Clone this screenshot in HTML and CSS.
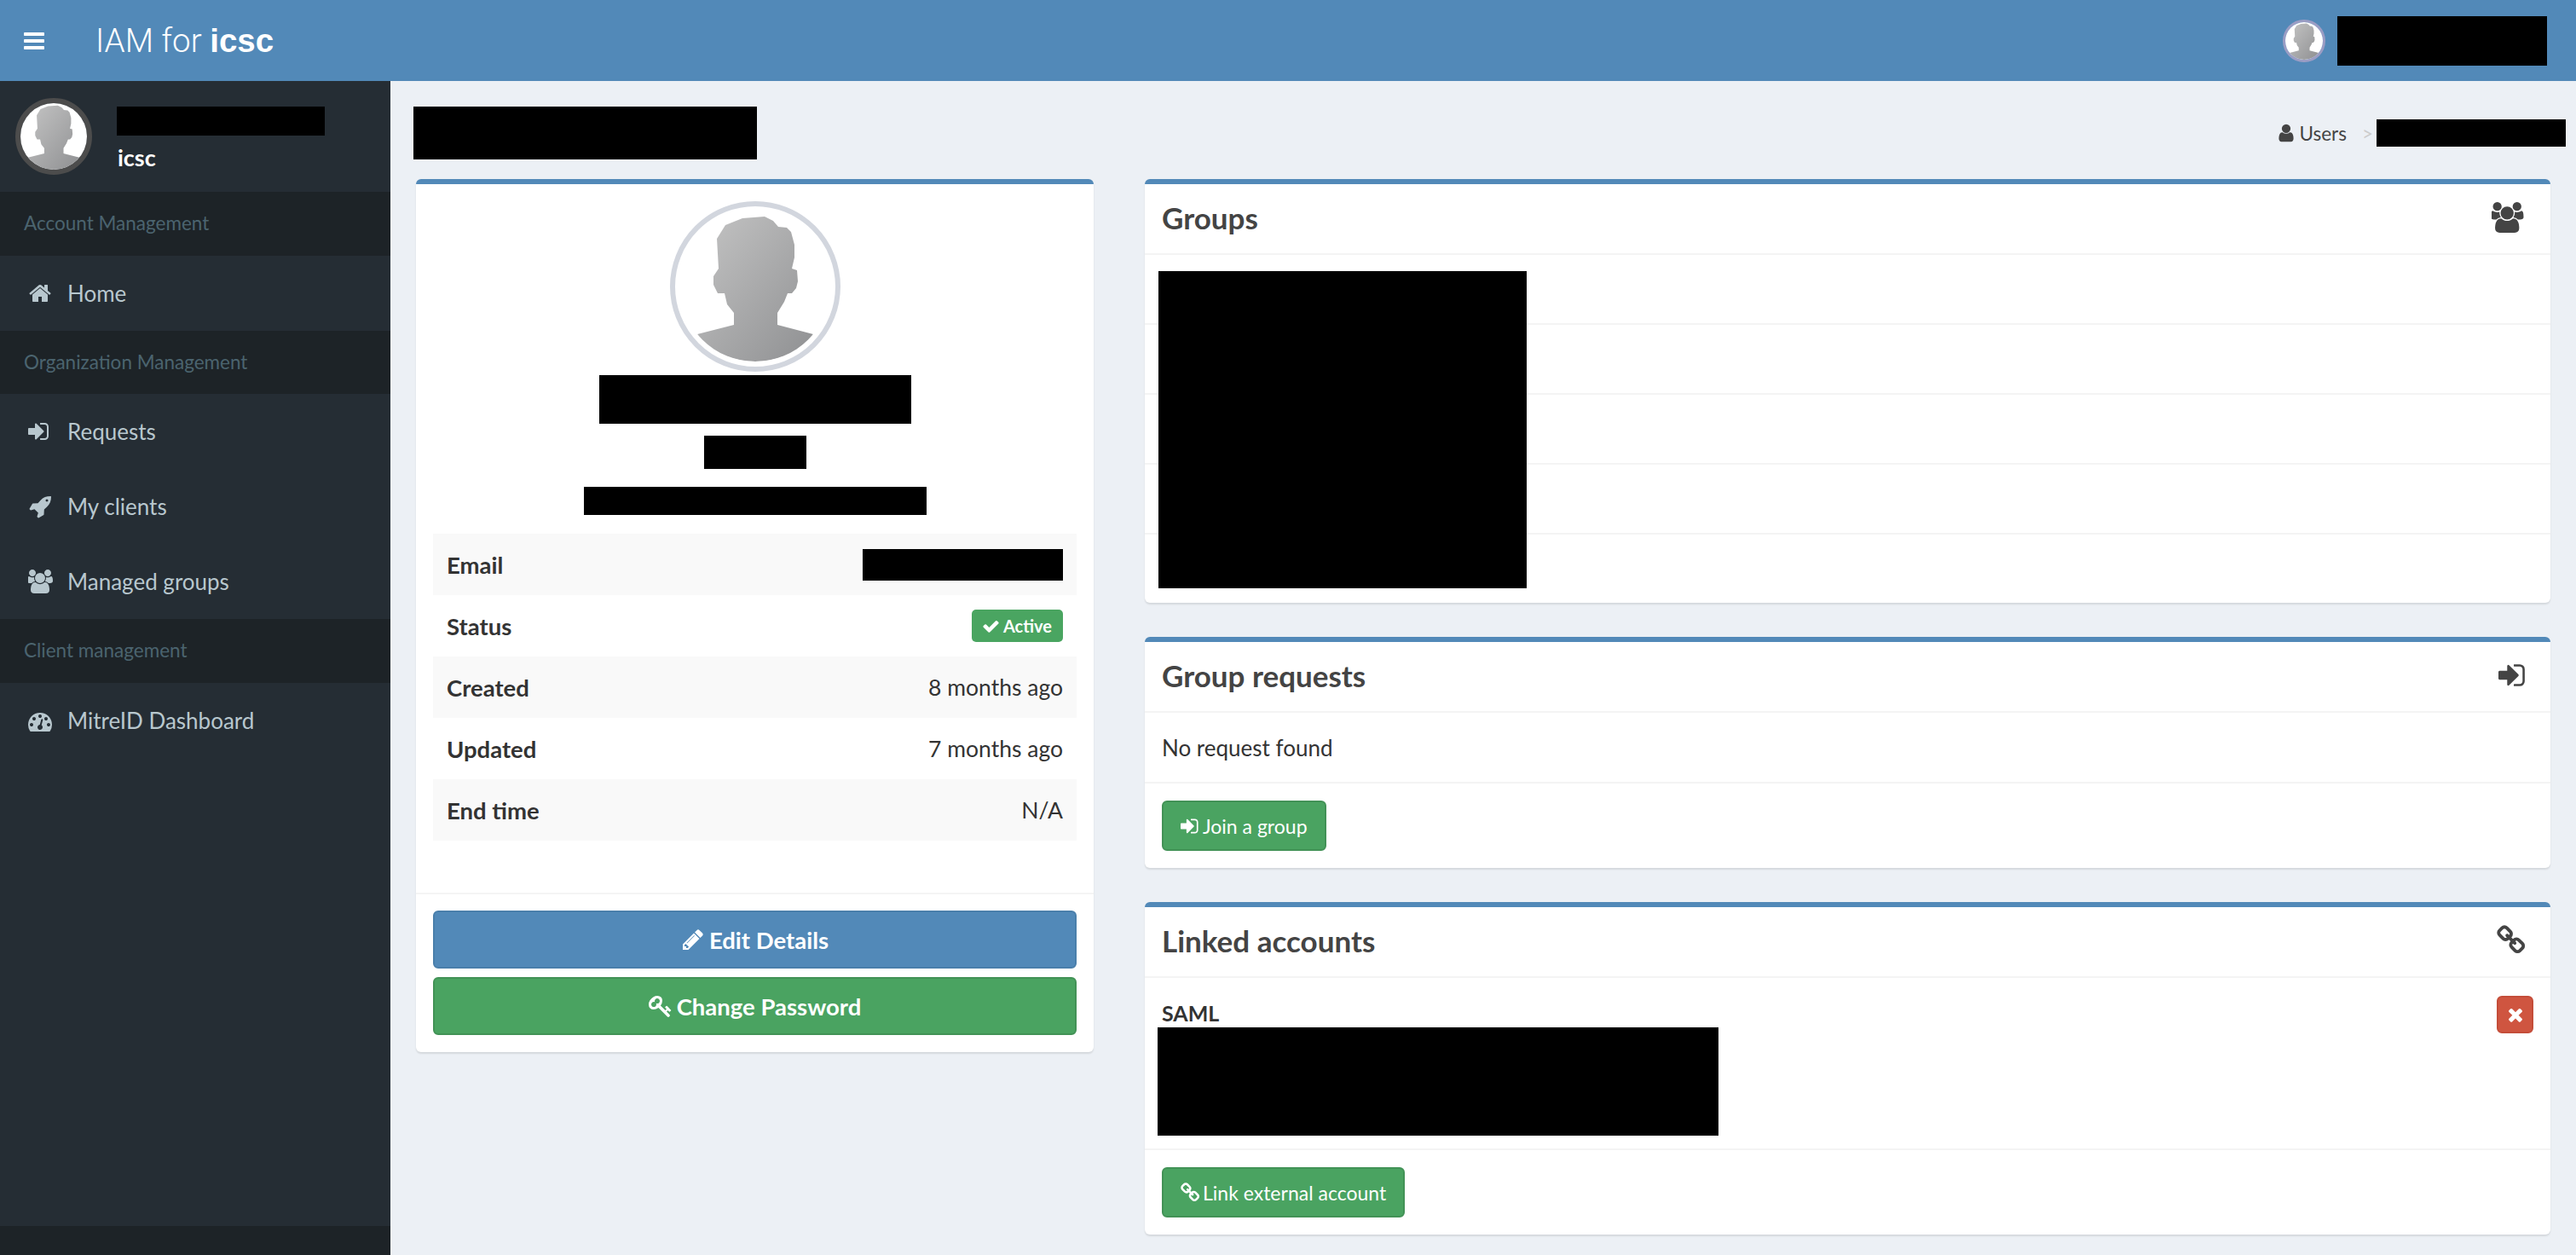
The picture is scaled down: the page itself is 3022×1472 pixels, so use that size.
FILE: index.html
```html
<!DOCTYPE html>
<html lang="en">
<head>
<meta charset="utf-8">
<title>IAM for icsc</title>
<link rel="stylesheet" href="styles.css">
</head>
<body>
<svg class="sprite" xmlns="http://www.w3.org/2000/svg">
  <defs>
    <linearGradient id="sil" x1="0" y1="0" x2="1" y2="1">
      <stop offset="0" stop-color="#c4c4c4"/>
      <stop offset="1" stop-color="#8f9092"/>
    </linearGradient>
  </defs>
  <symbol id="avatar" viewBox="12 12 176 176">
    <circle cx="100" cy="100" r="100" fill="#fff"/>
    <path fill="url(#sil)" d="M111 18 L121 23 L127 30 L137 31 L142 36 L146 51 L146 66 L143 79 L149 81 L150 94 L148 102 L143 108 L138 108 L134 118 L126 131 L126 145 L168 156 C155 176 128 188 100 188 C72 188 45 176 32 156 L75 145 L75 131 L67 121 L64 108 L56 108 L51 98 L51 88 L57 79 L55 44 L65 28 L85 20 Z"/>
  </symbol>
  <symbol id="i-bars" viewBox="0 0 1792 1792"><path d="M1664 1344v128q0 26-19 45t-45 19h-1408q-26 0-45-19t-19-45v-128q0-26 19-45t45-19h1408q26 0 45 19t19 45zm0-512v128q0 26-19 45t-45 19h-1408q-26 0-45-19t-19-45v-128q0-26 19-45t45-19h1408q26 0 45 19t19 45zm0-512v128q0 26-19 45t-45 19h-1408q-26 0-45-19t-19-45v-128q0-26 19-45t45-19h1408q26 0 45 19t19 45z"/></symbol>
  <symbol id="i-home" viewBox="0 0 1792 1792"><path d="M1472 992v480q0 26-19 45t-45 19h-384v-384h-256v384h-384q-26 0-45-19t-19-45v-480q0-1 .5-3t.5-3l575-474 575 474q1 2 1 6zm223-69l-62 74q-8 9-21 11h-3q-13 0-21-7l-692-577-692 577q-12 8-24 7-13-2-21-11l-62-74q-8-10-7-23.5t11-21.5l719-599q32-26 76-26t76 26l244 204v-195q0-14 9-23t23-9h192q14 0 23 9t9 23v408l219 182q10 8 11 21.5t-7 23.5z"/></symbol>
  <symbol id="i-signin" viewBox="0 0 1792 1792"><path d="M1184 896q0 26-19 45l-544 544q-19 19-45 19t-45-19-19-45v-288h-448q-26 0-45-19t-19-45v-384q0-26 19-45t45-19h448v-288q0-26 19-45t45-19 45 19l544 544q19 19 19 45zm352-352v704q0 119-84.5 203.5t-203.5 84.5h-320q-13 0-22.5-9.5t-9.5-22.5q0-4-1-20t-.5-26.5 3-23.5 10-19.5 20.5-6.5h320q66 0 113-47t47-113v-704q0-66-47-113t-113-47h-288-11-13t-11.5-1-11.5-3-8-5.5-7-9-2-13.5q0-4-1-20t-.5-26.5 3-23.5 10-19.5 20.5-6.5h320q119 0 203.5 84.5t84.5 203.5z"/></symbol>
  <symbol id="i-rocket" viewBox="0 0 1792 1792"><path d="M1504 448q0-40-28-68t-68-28-68 28-28 68 28 68 68 28 68-28 28-68zm224-288q0 249-75.5 430.5t-253.5 360.5q-81 80-195 176l-20 379q-2 16-16 26l-384 224q-7 4-16 4-12 0-23-9l-64-64q-13-14-8-32l85-276-281-281-276 85q-3 1-9 1-14 0-23-9l-64-64q-17-19-5-39l224-384q10-14 26-16l379-20q96-114 176-195 188-187 358-258t431-71q14 0 24 9.5t10 22.5z"/></symbol>
  <symbol id="i-users" viewBox="0 0 1920 1792"><path d="M529 896q-162 5-265 128h-134q-82 0-138-40.5t-56-118.5q0-353 124-353 6 0 43.5 21t97.5 42.5 119 21.5q67 0 133-23-5 37-5 66 0 139 81 256zm1071 637q0 120-73 189.5t-194 69.5h-874q-121 0-194-69.5t-73-189.5q0-53 3.5-103.5t14-109 26.5-108.5 43-97.5 62-81 85.5-53.5 111.5-20q10 0 43 21.5t73 48 107 48 135 21.5 135-21.5 107-48 73-48 43-21.5q61 0 111.5 20t85.5 53.5 62 81 43 97.5 26.5 108.5 14 109 3.5 103.5zm-1024-1277q0 106-75 181t-181 75-181-75-75-181 75-181 181-75 181 75 75 181zm704 384q0 159-112.5 271.5t-271.5 112.5-271.5-112.5-112.5-271.5 112.5-271.5 271.5-112.5 271.5 112.5 112.5 271.5zm576 225q0 78-56 118.5t-138 40.5h-134q-103-123-265-128 81-117 81-256 0-29-5-66 66 23 133 23 59 0 119-21.5t97.5-42.5 43.5-21q124 0 124 353zm-128-609q0 106-75 181t-181 75-181-75-75-181 75-181 181-75 181 75 75 181z"/></symbol>
  <symbol id="i-dash" viewBox="0 0 1792 1792"><path d="M384 1216q0-53-37.5-90.5t-90.5-37.5-90.5 37.5-37.5 90.5 37.5 90.5 90.5 37.5 90.5-37.5 37.5-90.5zm192-448q0-53-37.5-90.5t-90.5-37.5-90.5 37.5-37.5 90.5 37.5 90.5 90.5 37.5 90.5-37.5 37.5-90.5zm428 481l101-382q6-26-7.5-48.5t-38.5-29.5-48 6.5-30 39.5l-101 382q-60 5-107 43.5t-63 98.5q-20 77 20 146t117 89 146-20 89-117q16-60-6-117t-72-91zm660-33q0-53-37.5-90.5t-90.5-37.5-90.5 37.5-37.5 90.5 37.5 90.5 90.5 37.5 90.5-37.5 37.5-90.5zm-640-640q0-53-37.5-90.5t-90.5-37.5-90.5 37.5-37.5 90.5 37.5 90.5 90.5 37.5 90.5-37.5 37.5-90.5zm448 192q0-53-37.5-90.5t-90.5-37.5-90.5 37.5-37.5 90.5 37.5 90.5 90.5 37.5 90.5-37.5 37.5-90.5zm320 448q0 261-141 483-19 29-54 29h-1402q-35 0-54-29-141-221-141-483 0-182 71-348t191-286 286-191 348-71 348 71 286 191 191 286 71 348z"/></symbol>
  <symbol id="i-user" viewBox="0 0 1792 1792"><path d="M1536 1399q0 109-62.5 187t-150.5 78h-854q-88 0-150.5-78t-62.5-187q0-85 8.5-160.5t31.5-152 58.5-131 94-89 134.5-34.5q131 128 313 128t313-128q76 0 134.5 34.5t94 89 58.5 131 31.5 152 8.5 160.5zm-256-887q0 159-112.5 271.5t-271.5 112.5-271.5-112.5-112.5-271.5 112.5-271.5 271.5-112.5 271.5 112.5 112.5 271.5z"/></symbol>
  <symbol id="i-check" viewBox="0 0 1792 1792"><path d="M1671 566q0 40-28 68l-724 724-136 136q-28 28-68 28t-68-28l-136-136-362-362q-28-28-28-68t28-68l136-136q28-28 68-28t68 28l294 295 656-657q28-28 68-28t68 28l136 136q28 28 28 68z"/></symbol>
  <symbol id="i-pencil" viewBox="0 0 1792 1792"><path d="M491 1536l91-91-235-235-91 91v107h128v128h107zm523-928q0-22-22-22-10 0-17 7l-542 542q-7 7-7 17 0 22 22 22 10 0 17-7l542-542q7-7 7-17zm-54-192l416 416-832 832h-416v-416zm683 96q0 53-37 90l-166 166-416-416 166-165q36-38 90-38 53 0 91 38l235 234q37 39 37 91z"/></symbol>
  <symbol id="i-key" viewBox="0 0 1792 1792"><path d="M832 512q0-80-56-136t-136-56-136 56-56 136q0 42 19 83-41-19-83-19-80 0-136 56t-56 136 56 136 136 56 136-56 56-136q0-42-19-83 41 19 83 19 80 0 136-56t56-136zm851 704q0 17-49 66t-66 49q-9 0-28.5-16t-36.5-33-38.5-40-24.5-26l-96 96 220 220q28 28 28 68 0 42-39 81t-81 39q-40 0-68-28l-671-671q-176 131-365 131-163 0-265.5-102.5t-102.5-265.5q0-160 95-313t248-248 313-95q163 0 265.5 102.5t102.5 265.5q0 189-131 365l355 355 96-96q-3-3-26-24.5t-40-38.5-33-36.5-16-28.5q0-17 49-66t66-49q13 0 23 10 6 6 46 44.5t82 79.5 86.5 86 73 78 28.5 41z"/></symbol>
  <symbol id="i-link" viewBox="0 0 1792 1792"><path d="M1456 1216q0-40-28-68l-208-208q-28-28-68-28-42 0-72 32 3 3 19 18.5t21.5 21.5 15 19 13 25.5 3.5 27.5q0 40-28 68t-68 28q-15 0-27.5-3.5t-25.5-13-19-15-21.5-21.5-18.5-19q-33 31-33 73 0 40 28 68l206 207q27 27 68 27 40 0 68-26l147-146q28-28 28-67zm-703-705q0-40-28-68l-206-207q-28-28-68-28-39 0-68 27l-147 146q-28 28-28 67 0 40 28 68l208 208q27 27 68 27 42 0 72-31-3-3-19-18.5t-21.5-21.5-15-19-13-25.5-3.5-27.5q0-40 28-68t68-28q15 0 27.5 3.5t25.5 13 19 15 21.5 21.5 18.5 19q33-31 33-73zm895 705q0 120-85 203l-147 146q-83 83-203 83-121 0-204-85l-206-207q-83-83-83-203 0-123 88-209l-88-88q-86 88-208 88-120 0-204-84l-208-208q-84-84-84-204t85-203l147-146q83-83 203-83 121 0 204 85l206 207q83 83 83 203 0 123-88 209l88 88q86-88 208-88 120 0 204 84l208 208q84 84 84 204z"/></symbol>
  <symbol id="i-times" viewBox="0 0 1792 1792"><path d="M1490 1322q0 40-28 68l-136 136q-28 28-68 28t-68-28l-294-294-294 294q-28 28-68 28t-68-28l-136-136q-28-28-28-68t28-68l294-294-294-294q-28-28-28-68t28-68l136-136q28-28 68-28t68 28l294 294 294-294q28-28 68-28t68 28l136 136q28 28 28 68t-28 68l-294 294 294 294q28 28 28 68z"/></symbol>
</svg>

<div class="app">
  <header class="topbar">
    <svg class="fa fa-bars"><use href="#i-bars"/></svg>
    <div class="brand"><span class="brand-light">IAM for</span> <b class="brand-bold">icsc</b></div>
    <div class="top-user">
      <svg class="avatar avatar-top"><use href="#avatar"/></svg>
      <div class="redact r-top-user"></div>
    </div>
  </header>

  <aside class="sidebar">
    <div class="user-panel">
      <svg class="avatar avatar-side"><use href="#avatar"/></svg>
      <div class="user-info">
        <div class="redact r-side-user"></div>
        <div class="user-org">icsc</div>
      </div>
    </div>
    <nav class="menu">
      <div class="menu-head">Account Management</div>
      <a class="menu-item"><svg class="fa"><use href="#i-home"/></svg><span>Home</span></a>
      <div class="menu-head">Organization Management</div>
      <a class="menu-item"><svg class="fa"><use href="#i-signin"/></svg><span>Requests</span></a>
      <a class="menu-item"><svg class="fa"><use href="#i-rocket"/></svg><span>My clients</span></a>
      <a class="menu-item"><svg class="fa fa-wide"><use href="#i-users"/></svg><span>Managed groups</span></a>
      <div class="menu-head">Client management</div>
      <a class="menu-item"><svg class="fa"><use href="#i-dash"/></svg><span>MitreID Dashboard</span></a>
    </nav>
    <div class="sidebar-foot"></div>
  </aside>

  <main class="content">
    <div class="page-head">
      <div class="redact r-title"></div>
      <div class="crumbs">
        <svg class="fa fa-crumb"><use href="#i-user"/></svg>
        <span class="crumb-text">Users</span>
        <span class="crumb-sep">&gt;</span>
        <div class="redact r-crumb"></div>
      </div>
    </div>

    <div class="columns">
      <section class="card profile">
        <div class="profile-top">
          <svg class="avatar avatar-big"><use href="#avatar"/></svg>
          <div class="redact r-name"></div>
          <div class="redact r-role"></div>
          <div class="redact r-sub"></div>
        </div>
        <div class="facts">
          <div class="fact"><b>Email</b><div class="redact r-email"></div></div>
          <div class="fact"><b>Status</b><span class="badge"><svg class="fa fa-badge"><use href="#i-check"/></svg>Active</span></div>
          <div class="fact"><b>Created</b><span>8 months ago</span></div>
          <div class="fact"><b>Updated</b><span>7 months ago</span></div>
          <div class="fact"><b>End time</b><span>N/A</span></div>
        </div>
        <div class="profile-foot">
          <a class="btn btn-blue btn-block"><svg class="fa fa-btn"><use href="#i-pencil"/></svg>Edit Details</a>
          <a class="btn btn-green btn-block"><svg class="fa fa-btn"><use href="#i-key"/></svg>Change Password</a>
        </div>
      </section>

      <div class="stack">
        <section class="card">
          <div class="card-head"><h3>Groups</h3><svg class="fa fa-head fa-head-wide"><use href="#i-users"/></svg></div>
          <div class="group-list">
            <div class="group-row"></div>
            <div class="group-row"></div>
            <div class="group-row"></div>
            <div class="group-row"></div>
            <div class="group-row group-row-last"></div>
            <div class="redact r-groups"></div>
          </div>
        </section>

        <section class="card">
          <div class="card-head"><h3>Group requests</h3><svg class="fa fa-head fa-head-signin"><use href="#i-signin"/></svg></div>
          <div class="card-body empty">No request found</div>
          <div class="card-foot"><a class="btn btn-green btn-small"><svg class="fa fa-small"><use href="#i-signin"/></svg>Join a group</a></div>
        </section>

        <section class="card">
          <div class="card-head"><h3>Linked accounts</h3><svg class="fa fa-head fa-head-link"><use href="#i-link"/></svg></div>
          <div class="card-body linked">
            <div class="linked-main">
              <b class="linked-type">SAML</b>
              <div class="redact r-linked"></div>
            </div>
            <a class="btn-delete"><svg class="fa fa-del"><use href="#i-times"/></svg></a>
          </div>
          <div class="card-foot"><a class="btn btn-green btn-small"><svg class="fa fa-small"><use href="#i-link"/></svg>Link external account</a></div>
        </section>
      </div>
    </div>
  </main>
</div>
</body>
</html>
```

FILE: styles.css
```css
* { box-sizing: border-box; }
html, body { margin: 0; height: 100%; }
body {
  font-family: "Lato", "Noto Sans", sans-serif;
  font-size: 26.5px;
  color: #333;
  background: #ecf0f5;
  overflow: hidden;
}
.sprite { width: 0; height: 0; position: absolute; }
.fa { width: 28px; height: 28px; fill: currentColor; flex: none; display: block; }
.redact { background: #000; flex: none; }

.app {
  display: grid;
  grid-template-columns: 458px 1fr;
  grid-template-rows: 95px 1fr;
  height: 1472px;
}

/* top bar */
.topbar {
  grid-column: 1 / -1;
  background: #5289b8;
  color: #fff;
  display: flex;
  align-items: center;
  padding: 0 34px 0 26px;
}
.fa-bars { margin-right: 58px; }
.brand { font-size: 38.5px; font-family: "Roboto", "Liberation Sans", sans-serif; white-space: pre; }
.brand-light { font-weight: 300; }
.brand-bold { font-family: "Liberation Sans", sans-serif; font-weight: 700; }
.top-user { margin-left: auto; display: flex; align-items: center; gap: 14px; }
.r-top-user { width: 246px; height: 58px; }
.avatar { display: block; border-radius: 50%; flex: none; }
.avatar-top { width: 50px; height: 50px; border: 3px solid #9b9dc4; }
.avatar-side { width: 90px; height: 90px; border: 6px solid #4c4c4c; }
.avatar-big { width: 200px; height: 200px; border: 6px solid #d2d6de; padding: 6px; }

/* sidebar */
.sidebar { background: #252d34; display: flex; flex-direction: column; }
.user-panel { height: 130px; display: flex; align-items: center; padding: 0 0 0 18px; gap: 29px; }
.user-info { display: flex; flex-direction: column; align-self: flex-start; padding-top: 30px; }
.r-side-user { width: 244px; height: 34px; }
.user-org { color: #fff; font-weight: 700; font-size: 27px; line-height: 34px; margin: 9px 0 0 1px; }
.menu { flex: 1; }
.menu-head {
  height: 74.67px;
  line-height: 74.67px;
  background: #1d2327;
  color: #4b646f;
  font-size: 22.5px;
  padding-left: 28px;
}
.menu-item {
  height: 88px;
  display: flex;
  align-items: center;
  padding-left: 33px;
  color: #b8c7ce;
  font-size: 26px;
}
.menu-item .fa { margin-right: 18px; }
.menu-item .fa-wide { width: 30px; margin-right: 16px; }
.sidebar-foot { height: 34px; background: #1d2327; }

/* content */
.content { padding-top: 30px; min-width: 0; }
.page-head {
  display: flex;
  align-items: center;
  justify-content: space-between;
  padding: 0 12px 0 27px;
  margin-bottom: 23px;
}
.r-title { width: 403px; height: 62px; }
.crumbs { display: flex; align-items: center; color: #444; font-size: 22.5px; }
.fa-crumb { width: 24px; height: 24px; margin-right: 3px; }
.crumb-text { margin-right: 18px; }
.crumb-sep { color: #ccc; margin-right: 4px; }
.r-crumb { width: 222px; height: 32px; }

.columns {
  display: grid;
  grid-template-columns: 795px 1fr;
  gap: 60px;
  padding: 0 30px;
  align-items: start;
}
.stack { display: flex; flex-direction: column; gap: 40px; }
.card {
  background: #fff;
  border-top: 6px solid #5289b8;
  border-radius: 6px;
  box-shadow: 0 2px 2px rgba(0, 0, 0, .1);
}

/* profile card */
.profile-top { display: flex; flex-direction: column; align-items: center; padding-top: 20px; }
.r-name { width: 366px; height: 57px; margin-top: 4px; }
.r-role { width: 120px; height: 39px; margin-top: 14px; }
.r-sub { width: 402px; height: 33px; margin-top: 21px; }
.facts { margin: 22px 20px 0; padding-bottom: 61px; }
.fact {
  height: 72px;
  display: flex;
  align-items: center;
  justify-content: space-between;
  padding: 0 16px;
}
.fact b { font-size: 27.5px; }
.fact:nth-child(odd) { background: #f9f9f9; }
.r-email { width: 235px; height: 37px; }
.badge {
  display: flex;
  align-items: center;
  height: 38px;
  padding: 0 13px 0 12px;
  background: #4aa561;
  color: #fff;
  border-radius: 5px;
  font-size: 20px;
  font-weight: 700;
}
.fa-badge { width: 21px; height: 21px; margin-right: 4px; }
.profile-foot {
  border-top: 2px solid #f4f4f4;
  padding: 19px 20px 20px;
  display: flex;
  flex-direction: column;
  gap: 10px;
}

/* buttons */
.btn {
  display: flex;
  align-items: center;
  color: #fff;
  border-radius: 6px;
  border: 2px solid transparent;
}
.btn-blue { background: #5289b8; border-color: #4a7fab; }
.btn-green { background: #4aa361; border-color: #429256; }
.btn-block { height: 68px; justify-content: center; font-weight: 700; font-size: 27.5px; }
.fa-btn { width: 28px; height: 28px; margin-right: 5px; }
.btn-small { height: 59px; padding: 0 20px; font-size: 23px; }
.fa-small { width: 24px; height: 24px; margin-right: 2px; }

/* right cards */
.card-head {
  height: 83px;
  border-bottom: 2px solid #f4f4f4;
  display: flex;
  align-items: center;
  justify-content: space-between;
  padding: 0 20px;
  color: #444;
}
.card-head h3 { margin: 0 0 3px; font-size: 35px; font-weight: 700; }
.fa-head { width: 36px; height: 36px; margin: 0 5px 3px 0; }
.fa-head-wide { width: 39px; margin-right: 10px; }
.fa-head-signin { margin-right: 5px; }
.fa-head-link { margin-right: 7px; }

.group-list { position: relative; }
.group-row { height: 82px; border-bottom: 2px solid #f4f4f4; }
.group-row-last { height: 80px; border-bottom: 0; }
.r-groups { position: absolute; left: 16px; top: 19px; width: 432px; height: 372px; }

.card-body { padding: 0 20px; border-bottom: 2px solid #f4f4f4; }
.empty { height: 83px; display: flex; align-items: center; font-size: 26px; }
.card-foot { display: flex; padding: 20px; }
.linked {
  height: 202px;
  display: flex;
  justify-content: space-between;
  padding-top: 21px;
}
.linked-main { display: flex; flex-direction: column; }
.linked-type { height: 37px; line-height: 40px; font-size: 25px; }
.r-linked { width: 658px; height: 127px; margin-left: -5px; }
.btn-delete {
  width: 43px;
  height: 44px;
  background: #cf5540;
  border: 2px solid #c44d39;
  border-radius: 6px;
  color: #fff;
  display: flex;
  align-items: center;
  justify-content: center;
}
.fa-del { width: 24px; height: 24px; }
```
